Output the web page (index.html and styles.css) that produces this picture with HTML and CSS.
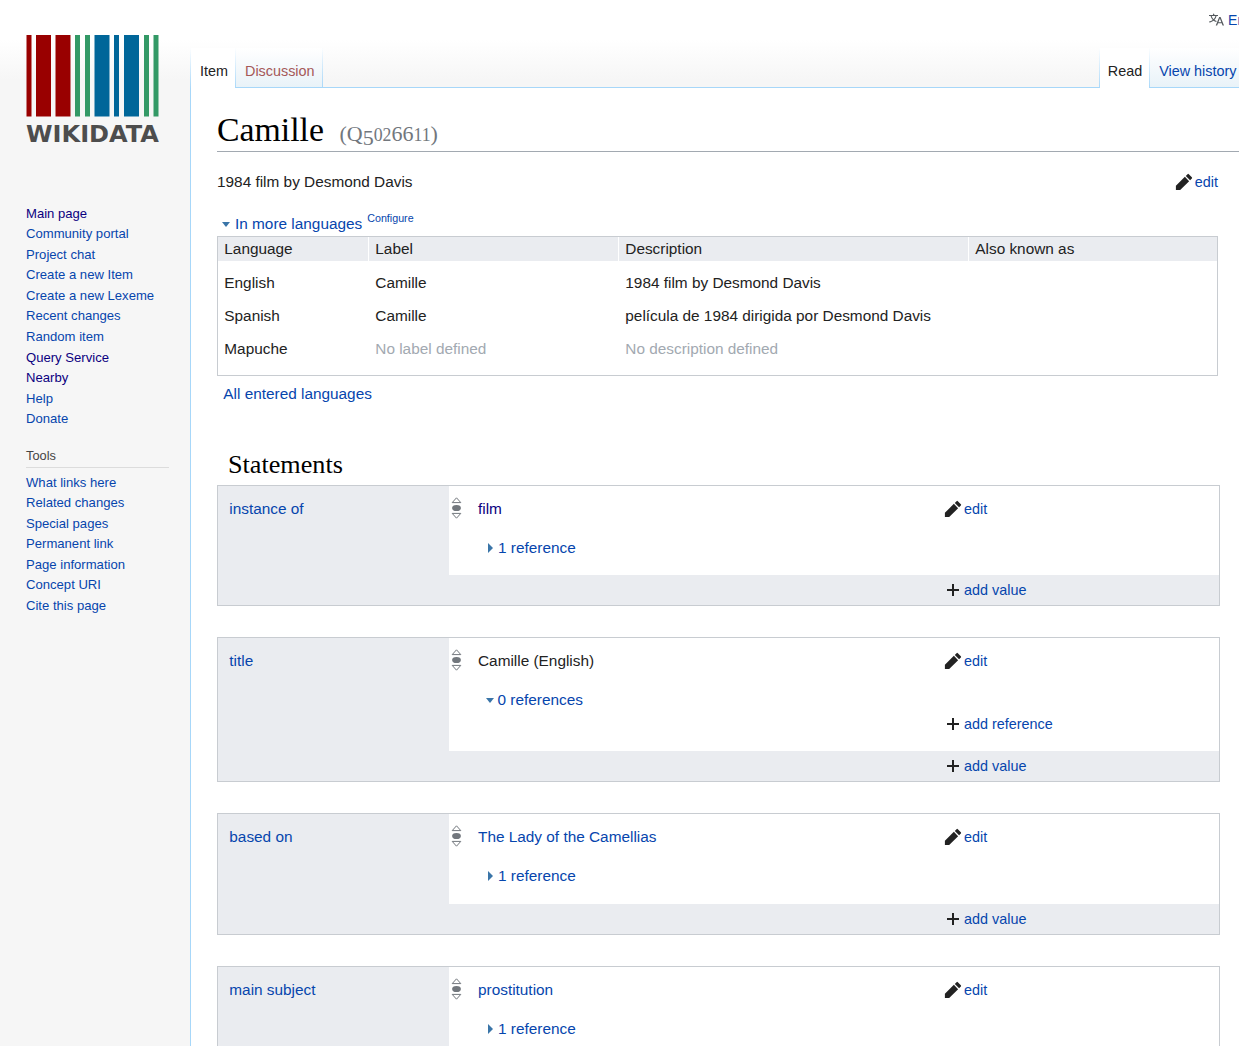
FILE: index.html
```html
<!DOCTYPE html>
<html lang="en">
<head>
<meta charset="utf-8">
<title>Camille - Wikidata</title>
<link rel="stylesheet" href="styles.css">
</head>
<body>
<svg class="sprites" width="0" height="0" aria-hidden="true">
  <symbol id="i-edit" viewBox="0 0 20 20"><path d="M16.77 8l1.94-2a1 1 0 0 0 0-1.41l-3.34-3.3a1 1 0 0 0-1.41 0L12 3.23zm-5.81-3.71L1 14.25V19h4.75l9.96-9.96z"/></symbol>
  <symbol id="i-add" viewBox="0 0 20 20"><path d="M11 9V4H9v5H4v2h5v5h2v-5h5V9z"/></symbol>
  <symbol id="i-rank" viewBox="0 0 11 22">
    <path d="M1.2 5.6 5.5.8 9.8 5.6Z" fill="none" stroke="#72777d" stroke-width="1" stroke-linejoin="round"/>
    <ellipse cx="5.5" cy="11" rx="4.4" ry="3.1" fill="#72777d"/>
    <path d="M1.2 16.4 5.5 21.2 9.8 16.4Z" fill="none" stroke="#72777d" stroke-width="1" stroke-linejoin="round"/>
  </symbol>
</svg>
<aside class="sidebar">
  <svg class="logo" width="134" height="108" viewBox="0 0 134 108" role="img" aria-label="Wikidata">
    <g fill="#990000"><rect x="0.5" width="5" height="81.5"/><rect x="10" width="15" height="81.5"/><rect x="29.5" width="15" height="81.5"/></g>
    <g fill="#339966"><rect x="49" width="5" height="81.5"/><rect x="59" width="5" height="81.5"/><rect x="118" width="5" height="81.5"/><rect x="127.5" width="5" height="81.5"/></g>
    <g fill="#006699"><rect x="68.5" width="15" height="81.5"/><rect x="88" width="5" height="81.5"/><rect x="98" width="15" height="81.5"/></g>
    <text class="logo-text" x="0" y="107" textLength="133" lengthAdjust="spacingAndGlyphs">WIKIDATA</text>
  </svg>
  <nav class="portal portal-main">
    <a class="visited" href="#">Main page</a>
    <a href="#">Community portal</a>
    <a href="#">Project chat</a>
    <a href="#">Create a new Item</a>
    <a href="#">Create a new Lexeme</a>
    <a href="#">Recent changes</a>
    <a href="#">Random item</a>
    <a class="visited" href="#">Query Service</a>
    <a class="visited" href="#">Nearby</a>
    <a href="#">Help</a>
    <a href="#">Donate</a>
  </nav>
  <h3 class="portal-title">Tools</h3>
  <nav class="portal">
    <a href="#">What links here</a>
    <a href="#">Related changes</a>
    <a href="#">Special pages</a>
    <a href="#">Permanent link</a>
    <a href="#">Page information</a>
    <a href="#">Concept URI</a>
    <a href="#">Cite this page</a>
  </nav>
</aside>
<div class="main">
  <div class="topbar">
    <svg class="lang-icon" width="15" height="15" viewBox="0 0 20 20"><path d="M20 18h-1.44a.6.6 0 0 1-.4-.12.8.8 0 0 1-.23-.31L17 15h-5l-1 2.54a.8.8 0 0 1-.22.3.6.6 0 0 1-.4.14H9l4.55-11.47h1.89zm-3.53-4.31L14.89 9.5a12 12 0 0 1-.39-1.24q-.09.37-.19.69l-.19.56-1.58 4.19zm-6.3-1.58a13.4 13.4 0 0 1-2.91-1.41 11.46 11.46 0 0 0 2.81-5.37H12V4H7.31a4 4 0 0 0-.2-.56C6.87 2.79 6.6 2 6.6 2l-1.47.5s.4.89.6 1.5H0v1.33h2.15A11.23 11.23 0 0 0 5 10.7a17.2 17.2 0 0 1-5 2.1q.56.82.87 1.38a23.3 23.3 0 0 0 5.22-2.51 15.6 15.6 0 0 0 3.56 1.77zM3.63 5.33h4.91a8.1 8.1 0 0 1-2.45 4.45 9.1 9.1 0 0 1-2.46-4.45"/></svg>
    <a class="lang-link" href="#">English</a>
  </div>
  <div class="tabs">
    <span class="tab tab-selected tab-first">Item</span>
    <a class="tab tab-new" href="#">Discussion</a>
    <span class="tab-spacer"></span>
    <span class="tab tab-selected tab-left">Read</span>
    <a class="tab tab-link" href="#">View history</a>
  </div>
  <main class="content">
    <h1 class="title">Camille <span class="qid">(Q<span class="digit-drop">5</span><span class="digit-low">02</span>66<span class="digit-low">11</span>)</span></h1>
    <div class="desc-row">
      <span>1984 film by Desmond Davis</span>
      <a class="edit-link" href="#"><svg class="icon-edit"><use href="#i-edit"/></svg>edit</a>
    </div>
    <div class="more-langs">
      <span class="tri-down"></span><a href="#">In more languages</a><a class="configure" href="#">Configure</a>
    </div>
    <div class="terms">
      <div class="terms-row terms-head"><div>Language</div><div>Label</div><div>Description</div><div>Also known as</div></div>
      <div class="terms-body">
        <div class="terms-row"><div>English</div><div>Camille</div><div>1984 film by Desmond Davis</div><div></div></div>
        <div class="terms-row"><div>Spanish</div><div>Camille</div><div>película de 1984 dirigida por Desmond Davis</div><div></div></div>
        <div class="terms-row"><div>Mapuche</div><div class="undefined">No label defined</div><div class="undefined">No description defined</div><div></div></div>
      </div>
    </div>
    <a class="all-langs" href="#">All entered languages</a>
    <h2 class="statements">Statements</h2>

    <section class="stmt">
      <a class="prop" href="#">instance of</a>
      <div class="vals">
        <div class="val">
          <div class="val-row">
            <svg class="rank"><use href="#i-rank"/></svg>
            <a class="val-text visited" href="#">film</a>
            <a class="val-action" href="#"><svg class="icon-edit"><use href="#i-edit"/></svg>edit</a>
          </div>
          <a class="refs" href="#"><span class="tri-right"></span>1 reference</a>
        </div>
        <a class="add-band" href="#"><svg class="icon-add"><use href="#i-add"/></svg>add value</a>
      </div>
    </section>

    <section class="stmt">
      <a class="prop" href="#">title</a>
      <div class="vals">
        <div class="val">
          <div class="val-row">
            <svg class="rank"><use href="#i-rank"/></svg>
            <span class="val-text">Camille (English)</span>
            <a class="val-action" href="#"><svg class="icon-edit"><use href="#i-edit"/></svg>edit</a>
          </div>
          <a class="refs refs-open" href="#"><span class="tri-down"></span>0 references</a>
          <a class="add-ref" href="#"><svg class="icon-add"><use href="#i-add"/></svg>add reference</a>
        </div>
        <a class="add-band" href="#"><svg class="icon-add"><use href="#i-add"/></svg>add value</a>
      </div>
    </section>

    <section class="stmt">
      <a class="prop" href="#">based on</a>
      <div class="vals">
        <div class="val">
          <div class="val-row">
            <svg class="rank"><use href="#i-rank"/></svg>
            <a class="val-text" href="#">The Lady of the Camellias</a>
            <a class="val-action" href="#"><svg class="icon-edit"><use href="#i-edit"/></svg>edit</a>
          </div>
          <a class="refs" href="#"><span class="tri-right"></span>1 reference</a>
        </div>
        <a class="add-band" href="#"><svg class="icon-add"><use href="#i-add"/></svg>add value</a>
      </div>
    </section>

    <section class="stmt">
      <a class="prop" href="#">main subject</a>
      <div class="vals">
        <div class="val">
          <div class="val-row">
            <svg class="rank"><use href="#i-rank"/></svg>
            <a class="val-text" href="#">prostitution</a>
            <a class="val-action" href="#"><svg class="icon-edit"><use href="#i-edit"/></svg>edit</a>
          </div>
          <a class="refs" href="#"><span class="tri-right"></span>1 reference</a>
        </div>
        <a class="add-band" href="#"><svg class="icon-add"><use href="#i-add"/></svg>add value</a>
      </div>
    </section>
  </main>
</div>
</body>
</html>
```
FILE: styles.css
```css
* { box-sizing: border-box; }

html, body { height: 100%; overflow: hidden; }

body {
  margin: 0;
  display: flex;
  align-items: stretch;
  font-family: "Liberation Sans", Arial, sans-serif;
  font-size: 15.36px;
  color: #222;
  background: #f6f6f6 linear-gradient(#fff 50%, #f6f6f6 100%) no-repeat 0 0 / 100% 80px;
}

a { color: #0645ad; text-decoration: none; }
a.visited { color: #0b0080; }

.sprites { position: absolute; }

/* Sidebar */
.sidebar {
  flex: none;
  width: 190px;
  padding: 35px 0 0 26px;
}
.logo { display: block; }
.logo-text {
  font-family: "DejaVu Sans", sans-serif;
  font-weight: 700;
  font-size: 22.6px;
  fill: #4d4d4d;
}
.portal { display: flex; flex-direction: column; }
.portal a {
  display: block;
  height: 20.55px;
  line-height: 20.55px;
  font-size: 13.1px;
  white-space: nowrap;
}
.portal-main { margin-top: 60.7px; }
.portal-title {
  width: 143px;
  margin: 16.3px 0 4.6px;
  padding-bottom: 1px;
  font-size: 12.8px;
  font-weight: 400;
  line-height: 20px;
  color: #444;
  border-bottom: 1px solid #dcdcdc;
}

/* Main column */
.main {
  flex: none;
  width: 1083px;
  display: flex;
  flex-direction: column;
}
.topbar {
  flex: none;
  height: 48px;
  display: flex;
  justify-content: flex-end;
  align-items: flex-start;
  gap: 4px;
  margin-right: -1px;
  padding-top: 12px;
  font-size: 14px;
  line-height: 16px;
}
.lang-icon { flex: none; fill: #54595d; }

.tabs {
  flex: none;
  height: 40px;
  display: flex;
  font-size: 14.4px;
  line-height: 24px;
  padding-right: 27.5px;
}
.tab {
  display: block;
  flex: none;
  padding: 11px 8px 0;
  border-style: solid;
  border-width: 0 1px 0 0;
  border-image: linear-gradient(rgba(167, 215, 249, 0), #a7d7f9) 1;
  white-space: nowrap;
}
.tab-first, .tab-left { border-left-width: 1px; }
.tab-first { padding-left: 9px; padding-right: 7px; }
.tab-left { padding-right: 7px; }
.tab-selected { background: #fff; color: #222; }
.tab-new, .tab-link {
  background: linear-gradient(#fff, #e8f2f8);
  box-shadow: inset 0 -1px 0 #a7d7f9;
}
.tab-new { color: #a55858; padding-left: 9px; padding-right: 7px; }
.tab-link { padding-left: 9px; }
.tab-spacer { flex: 1; box-shadow: inset 0 -1px 0 #a7d7f9; }

.content {
  flex: 1;
  background: #fff;
  border-left: 1px solid #a7d7f9;
  padding-left: 26px;
}

.title {
  margin: 0;
  height: 64px;
  padding-top: 24px;
  font-family: "Liberation Serif", "Times New Roman", serif;
  font-size: 33.8px;
  font-weight: 400;
  line-height: 36px;
  color: #000;
  border-bottom: 1px solid #a2a9b1;
  white-space: nowrap;
}
.qid {
  margin-left: 7px;
  font-size: 22px;
  color: #72777d;
}
.digit-low { font-size: 17.8px; }
.digit-drop { position: relative; top: 4px; }

.desc-row {
  width: 1001px;
  margin-top: 18px;
  height: 24px;
  line-height: 24px;
  display: flex;
  justify-content: space-between;
}
.edit-link {
  display: flex;
  align-items: center;
  font-size: 14.4px;
}
.icon-edit { width: 18px; height: 18px; margin: 0 2px 0 1px; fill: #222; flex: none; }
.icon-add { width: 20px; height: 20px; margin-right: 1px; fill: #222; flex: none; }

.more-langs {
  margin-top: 18px;
  height: 24px;
  line-height: 24px;
  padding-left: 5px;
  display: flex;
  align-items: center;
}
.tri-down {
  flex: none;
  width: 0;
  height: 0;
  margin-right: 4px;
  border-style: solid;
  border-width: 5px 4.5px 0;
  border-color: #3a75a8 transparent transparent;
}
.more-langs .tri-down { margin-right: 5px; }
.tri-right {
  flex: none;
  width: 0;
  height: 0;
  margin-right: 5px;
  border-style: solid;
  border-width: 5px 0 5px 5px;
  border-color: transparent transparent transparent #3a75a8;
}
.configure {
  align-self: flex-start;
  margin: -1px 0 0 5px;
  font-size: 10.7px;
  line-height: 14px;
}

.terms {
  width: 1001px;
  border: 1px solid #c8ccd1;
}
.terms-row {
  display: grid;
  grid-template-columns: 151px 250px 350px 1fr;
  height: 33px;
  line-height: 33px;
}
.terms-row > div { padding-left: 6.3px; }
.terms-head { height: 24px; line-height: 24px; }
.terms-head > div { background: #eaecf0; border-right: 1px solid #fff; }
.terms-head > div:last-child { border-right: 0; }
.terms-body { padding: 4.5px 0 10.5px; }
.undefined { color: #a2a9b1; }

.all-langs {
  display: block;
  margin-top: 6px;
  padding-left: 6.3px;
  line-height: 24px;
}

.statements {
  margin: 41px 0 2px 11px;
  font-family: "Liberation Serif", "Times New Roman", serif;
  font-size: 26.2px;
  font-weight: 400;
  line-height: 36px;
  color: #000;
}

.stmt {
  width: 1003px;
  display: flex;
  margin-bottom: 31px;
  background: #eaecf0;
  border: 1px solid #c8ccd1;
}
.prop {
  flex: none;
  width: 231px;
  padding: 11px 0 0 11.3px;
  line-height: 24px;
}
.vals { flex: 1; min-width: 0; }
.val {
  background: #fff;
  padding: 11px 0 15.2px;
}
.val-row {
  display: flex;
  height: 24px;
  line-height: 24px;
  position: relative;
}
.rank { position: absolute; left: 1.5px; top: 0; width: 11px; height: 22px; }
.val-text { margin-left: 29px; flex: none; width: 465px; }
.val-action, .add-band, .add-ref {
  display: flex;
  align-items: center;
  font-size: 14.4px;
}
.refs {
  display: flex;
  align-items: center;
  height: 24px;
  margin-top: 15px;
  padding-left: 39px;
}
.refs-open { padding-left: 36.5px; }
.add-ref {
  height: 24px;
  margin-left: 494px;
}
.add-band {
  height: 30px;
  padding-left: 494px;
}
```
